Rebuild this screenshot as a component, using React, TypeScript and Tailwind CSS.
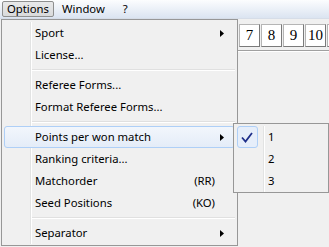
import React from 'react'

type Item =
  | { kind: 'item'; label: string; shortcut?: string; sub?: boolean; active?: boolean }
  | { kind: 'sep' }

const ITEMS: Item[] = [
  { kind: 'item', label: 'Sport', sub: true },
  { kind: 'item', label: 'License...' },
  { kind: 'sep' },
  { kind: 'item', label: 'Referee Forms...' },
  { kind: 'item', label: 'Format Referee Forms...' },
  { kind: 'sep' },
  { kind: 'item', label: 'Points per won match', sub: true, active: true },
  { kind: 'item', label: 'Ranking criteria...' },
  { kind: 'item', label: 'Matchorder', shortcut: '(RR)' },
  { kind: 'item', label: 'Seed Positions', shortcut: '(KO)' },
  { kind: 'sep' },
  { kind: 'item', label: 'Separator', sub: true },
]

function Arrow() {
  return (
    <svg width="4" height="7" viewBox="0 0 4 7" className="block">
      <path d="M0 0 L4 3.5 L0 7 Z" fill="#000" />
    </svg>
  )
}

function Check() {
  return (
    <svg width="12" height="11" viewBox="0 0 12 11" className="block">
      <path d="M1 5.5 L4.5 9.5 L11 1" fill="none" stroke="#1f2f8a" strokeWidth="1.8" />
    </svg>
  )
}

export default function App() {
  return (
    <div
      className="relative w-[329px] h-[247px] overflow-hidden bg-[#f0f0f0] text-[11.3px] text-black"
      style={{ fontFamily: '"Noto Sans", "Open Sans", sans-serif' }}
    >
      {/* Menu bar */}
      <div className="flex h-[19px] items-center bg-gradient-to-b from-[#fcfdfe] to-[#dbe4f1] border-b border-[#d6dde8]">
        <div className="ml-[2px] flex h-[16px] w-[52px] items-center justify-center rounded-[2px] border border-[#8e8f8f] bg-gradient-to-b from-[#e8e9ea] to-[#d9dadb] leading-none">
          Options
        </div>
        <div className="ml-[8px] leading-none">Window</div>
        <div className="ml-[18px] leading-none">?</div>
      </div>

      {/* Toolbar behind the menu */}
      <div className="flex pl-[239px] pt-[5px] gap-[1px]">
        {['7', '8', '9', '10', ''].map((n, i) => (
          <div
            key={i}
            className="flex h-[23px] w-[21px] shrink-0 items-center justify-center border border-[#b5b5b5] border-r-[#7a7a7a] border-b-[#7a7a7a] bg-white text-[15px] leading-none"
            style={{ fontFamily: '"Liberation Serif", serif' }}
          >
            {n}
          </div>
        ))}
      </div>
      <div className="mt-[3px] ml-[238px] h-[2px] border-t border-[#a0a0a0] border-b border-b-white" />

      {/* Options menu */}
      <div className="absolute left-[1px] top-[19px] w-[237px] border border-[#979797] bg-[#f0f0f0] p-[2px] pb-[1px]">
        <div className="relative">
          <div className="absolute left-[26px] top-0 bottom-0 w-[2px] border-l border-[#e2e3e3] border-r border-r-white" />
          {ITEMS.map((it, i) =>
            it.kind === 'sep' ? (
              <div key={i} className="flex h-[8px] items-center pl-[28px]">
                <div className="h-[2px] w-full border-t border-[#e0e0e0] border-b border-b-white" />
              </div>
            ) : (
              <div
                key={i}
                className={
                  'relative flex h-[22px] items-center pl-[30px] pr-[10px] ' +
                  (it.active
                    ? 'rounded-[3px] border border-[#aecff7] bg-gradient-to-b from-[#f2f6fc] to-[#e4ecf8]'
                    : 'border border-transparent')
                }
              >
                <span className="flex-1 leading-none">{it.label}</span>
                {it.shortcut && <span className="mr-[9px] leading-none">{it.shortcut}</span>}
                {it.sub && <Arrow />}
              </div>
            )
          )}
        </div>
      </div>

      {/* Submenu */}
      <div className="absolute left-[233px] top-[123px] w-[96px] border border-[#979797] bg-[#f0f0f0] p-[2px] pb-[0px]">
        <div className="relative">
          <div className="absolute left-[27px] top-0 bottom-0 w-[2px] border-l border-[#e2e3e3] border-r border-r-white" />
          {['1', '2', '3'].map((n, i) => (
            <div key={n} className="flex h-[22px] items-center">
              <div className="flex h-[22px] w-[22px] items-center justify-center">
                {i === 0 && (
                  <div className="flex h-[22px] w-[21px] items-center justify-center rounded-[3px] border border-[#aecff7] bg-[#e6eefa]">
                    <Check />
                  </div>
                )}
              </div>
              <span className="ml-[10px] leading-none">{n}</span>
            </div>
          ))}
        </div>
      </div>
    </div>
  )
}
